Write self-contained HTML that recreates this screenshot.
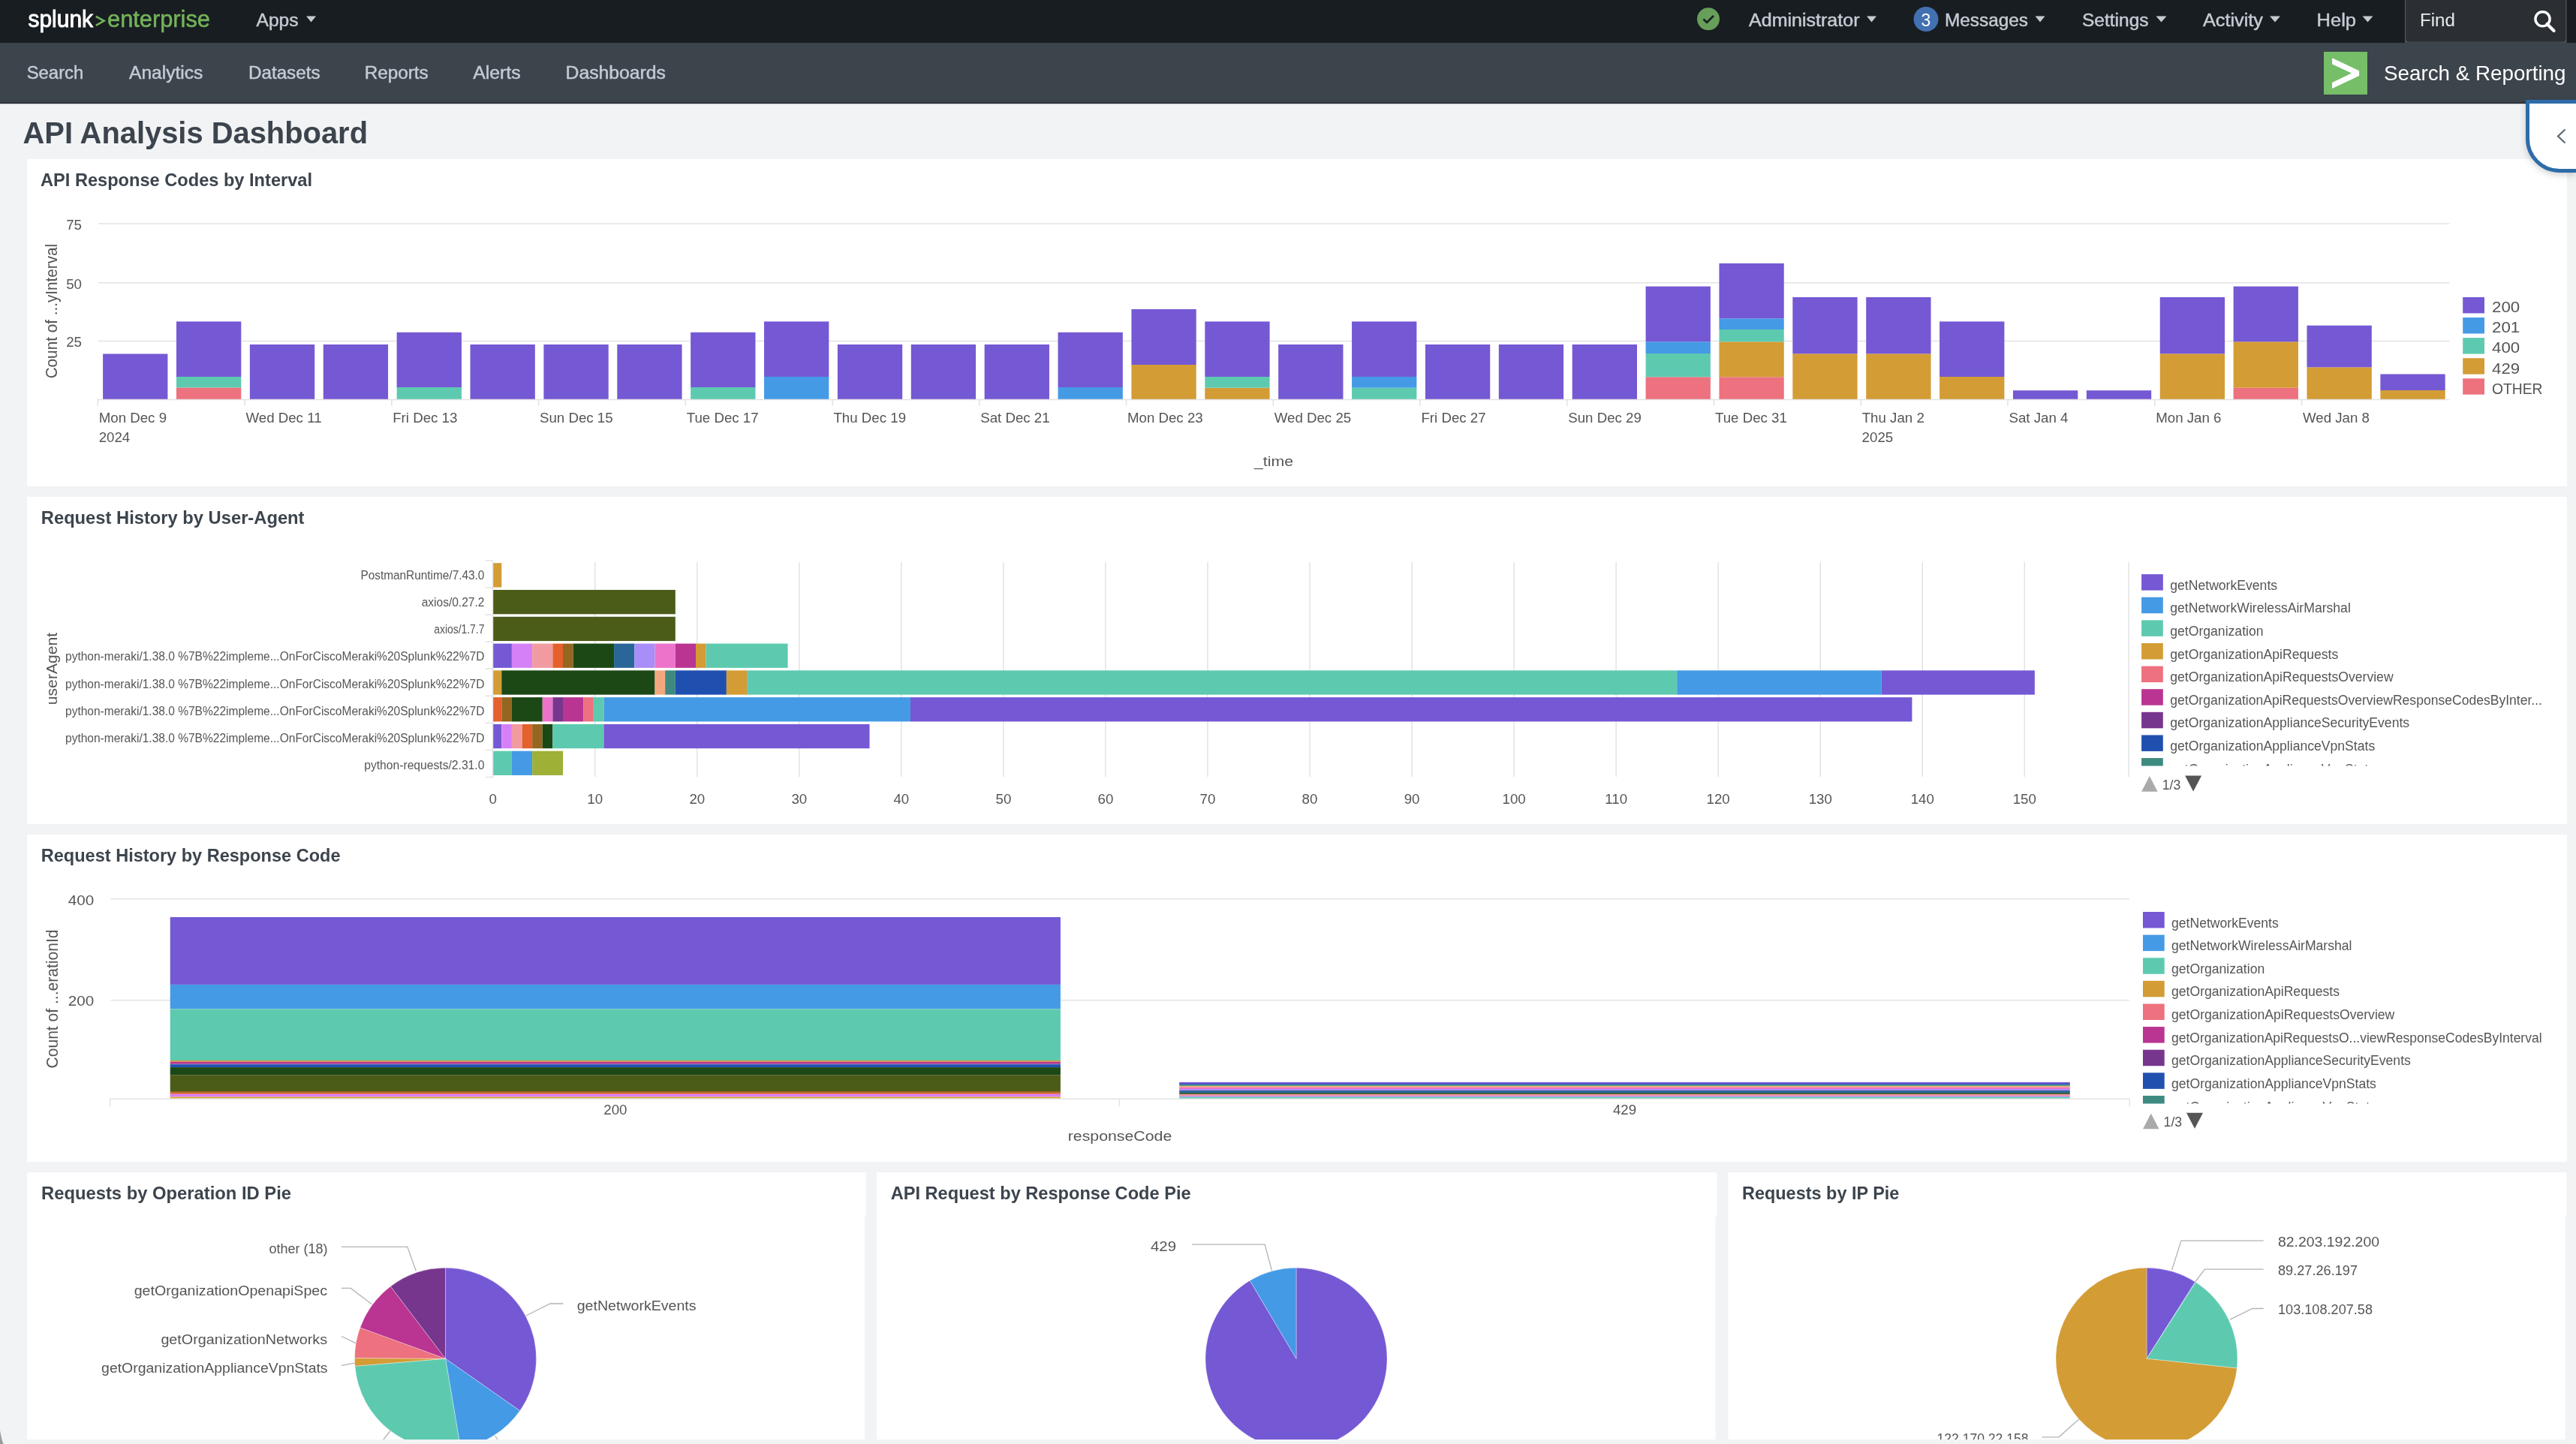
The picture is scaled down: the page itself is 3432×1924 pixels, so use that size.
<!DOCTYPE html>
<html><head><meta charset="utf-8"><title>API Analysis Dashboard</title>
<style>
html,body{margin:0;padding:0;background:#f2f3f5;}
body{width:3432px;height:1924px;overflow:hidden;font-family:"Liberation Sans", sans-serif;}
</style></head><body>
<svg width="3432" height="1924" viewBox="0 0 3432 1924" style="display:block;will-change:transform;font-family:'Liberation Sans', sans-serif"><defs><filter id="sh" x="-50%" y="-50%" width="200%" height="200%"><feDropShadow dx="0" dy="3" stdDeviation="4" flood-color="#000" flood-opacity="0.18"/></filter></defs><rect x="0" y="0" width="3432" height="1924" fill="#f2f3f5"/>
<rect x="0" y="0" width="3432" height="57" fill="#181d21"/>
<text x="37.5" y="36" font-size="31.5" fill="#ffffff" textLength="86.5" lengthAdjust="spacingAndGlyphs" stroke="#ffffff" stroke-width="0.9">splunk</text>
<polyline points="127.8,21.8 138.6,27.8 127.8,33.9" fill="none" stroke="#74b35a" stroke-width="2.6" stroke-linejoin="miter"/>
<text x="143" y="36" font-size="31" fill="#74b35a" textLength="137" lengthAdjust="spacingAndGlyphs" stroke="#74b35a" stroke-width="0.5">enterprise</text>
<text x="341.5" y="35" font-size="23" fill="#c4cbd3" textLength="56" lengthAdjust="spacingAndGlyphs" stroke="#c4cbd3" stroke-width="0.45">Apps</text>
<polygon points="408,21.5 421,21.5 414.5,29.5" fill="#c4cbd3"/>
<circle cx="2276" cy="25.3" r="15" fill="#669e5a"/>
<polyline points="2269.5,25.5 2274,30 2283,21" fill="none" stroke="#181d21" stroke-width="2.6"/>
<text x="2330" y="35" font-size="23" fill="#c4cbd3" textLength="147.5" lengthAdjust="spacingAndGlyphs" stroke="#c4cbd3" stroke-width="0.45">Administrator</text>
<polygon points="2487,21.5 2500,21.5 2493.5,29.5" fill="#c4cbd3"/>
<circle cx="2566" cy="25.5" r="16.5" fill="#4271b2"/>
<text x="2566" y="35" font-size="23" fill="#ffffff" text-anchor="middle">3</text>
<text x="2591" y="35" font-size="23" fill="#c4cbd3" textLength="111" lengthAdjust="spacingAndGlyphs" stroke="#c4cbd3" stroke-width="0.45">Messages</text>
<polygon points="2711.5,21.5 2724.5,21.5 2718,29.5" fill="#c4cbd3"/>
<text x="2774" y="35" font-size="23" fill="#c4cbd3" textLength="88.5" lengthAdjust="spacingAndGlyphs" stroke="#c4cbd3" stroke-width="0.45">Settings</text>
<polygon points="2872.5,21.5 2886.5,21.5 2879.5,29.5" fill="#c4cbd3"/>
<text x="2935" y="35" font-size="23" fill="#c4cbd3" textLength="80" lengthAdjust="spacingAndGlyphs" stroke="#c4cbd3" stroke-width="0.45">Activity</text>
<polygon points="3024,21.5 3038,21.5 3031,29.5" fill="#c4cbd3"/>
<text x="3086.5" y="35" font-size="23" fill="#c4cbd3" textLength="52.5" lengthAdjust="spacingAndGlyphs" stroke="#c4cbd3" stroke-width="0.45">Help</text>
<polygon points="3147.5,21.5 3161.5,21.5 3154.5,29.5" fill="#c4cbd3"/>
<rect x="3204" y="-2" width="215.5" height="58.8" fill="#50585f"/>
<rect x="3205.2" y="-6" width="213.1" height="61.8" rx="4" fill="#2b2f33"/>
<text x="3224" y="35.2" font-size="23" fill="#e8ebee" textLength="47" lengthAdjust="spacingAndGlyphs">Find</text>
<circle cx="3387.5" cy="25.3" r="9.6" fill="none" stroke="#ffffff" stroke-width="3.4"/>
<line x1="3393.5" y1="32" x2="3402.5" y2="41" stroke="#ffffff" stroke-width="4.2" stroke-linecap="round"/>
<rect x="0" y="57" width="3432" height="80" fill="#3c444c"/>
<rect x="0" y="136.8" width="3432" height="1.4" fill="#23282d"/>
<text x="35.7" y="105" font-size="23" fill="#c4cbd3" textLength="75.6" lengthAdjust="spacingAndGlyphs" stroke="#c4cbd3" stroke-width="0.45">Search</text>
<text x="172" y="105" font-size="23" fill="#c4cbd3" textLength="98.3" lengthAdjust="spacingAndGlyphs" stroke="#c4cbd3" stroke-width="0.45">Analytics</text>
<text x="331" y="105" font-size="23" fill="#c4cbd3" textLength="95.5" lengthAdjust="spacingAndGlyphs" stroke="#c4cbd3" stroke-width="0.45">Datasets</text>
<text x="485.8" y="105" font-size="23" fill="#c4cbd3" textLength="84.8" lengthAdjust="spacingAndGlyphs" stroke="#c4cbd3" stroke-width="0.45">Reports</text>
<text x="630.2" y="105" font-size="23" fill="#c4cbd3" textLength="63.4" lengthAdjust="spacingAndGlyphs" stroke="#c4cbd3" stroke-width="0.45">Alerts</text>
<text x="753.6" y="105" font-size="23" fill="#c4cbd3" textLength="133.3" lengthAdjust="spacingAndGlyphs" stroke="#c4cbd3" stroke-width="0.45">Dashboards</text>
<rect x="3096" y="69" width="58" height="57" fill="#76be68"/>
<polygon points="3107.1,77.2 3143.1,94.3 3143.1,101 3107.1,118 3107.1,109.9 3133,97.6 3107.1,85.4" fill="#ffffff"/>
<text x="3176" y="107" font-size="28.5" fill="#ffffff" textLength="242.5" lengthAdjust="spacingAndGlyphs">Search &amp; Reporting</text>
<text x="30.5" y="191.3" font-size="41.5" fill="#3c444d" font-weight="bold" textLength="459.5" lengthAdjust="spacingAndGlyphs">API Analysis Dashboard</text>
<rect x="36" y="212" width="3384" height="436" fill="#ffffff"/>
<rect x="36" y="662" width="3384" height="436" fill="#ffffff"/>
<rect x="36" y="1112" width="3384" height="436" fill="#ffffff"/>
<rect x="36" y="1562" width="1118" height="59" fill="#ffffff"/>
<rect x="36" y="1621" width="1116.2" height="297" fill="#ffffff"/>
<rect x="1168" y="1562" width="1119.5" height="59" fill="#ffffff"/>
<rect x="1168" y="1621" width="1117.5" height="297" fill="#ffffff"/>
<rect x="2302.5" y="1562" width="1117" height="59" fill="#ffffff"/>
<rect x="2302.5" y="1621" width="1115" height="297" fill="#ffffff"/>
<text x="54" y="247.8" font-size="24" fill="#3c444d" font-weight="bold" textLength="362" lengthAdjust="spacingAndGlyphs">API Response Codes by Interval</text>
<text x="54.8" y="698.3" font-size="24" fill="#3c444d" font-weight="bold" textLength="350.7" lengthAdjust="spacingAndGlyphs">Request History by User-Agent</text>
<text x="54.8" y="1148.1" font-size="24" fill="#3c444d" font-weight="bold" textLength="398.7" lengthAdjust="spacingAndGlyphs">Request History by Response Code</text>
<text x="55" y="1597.9" font-size="24" fill="#3c444d" font-weight="bold" textLength="333" lengthAdjust="spacingAndGlyphs">Requests by Operation ID Pie</text>
<text x="1186.7" y="1597.9" font-size="24" fill="#3c444d" font-weight="bold" textLength="399.9" lengthAdjust="spacingAndGlyphs">API Request by Response Code Pie</text>
<text x="2321" y="1597.6" font-size="24" fill="#3c444d" font-weight="bold" textLength="209.4" lengthAdjust="spacingAndGlyphs">Requests by IP Pie</text>
<line x1="131" y1="298" x2="3263.5" y2="298" stroke="#e3e3e3" stroke-width="1.5"/>
<line x1="131" y1="376.8" x2="3263.5" y2="376.8" stroke="#e3e3e3" stroke-width="1.5"/>
<line x1="131" y1="454.5" x2="3263.5" y2="454.5" stroke="#e3e3e3" stroke-width="1.5"/>
<text x="109" y="305.8" font-size="18.7" fill="#555555" text-anchor="end">75</text>
<text x="109" y="384.6" font-size="18.7" fill="#555555" text-anchor="end">50</text>
<text x="109" y="462.3" font-size="18.7" fill="#555555" text-anchor="end">25</text>
<text x="76.3" y="414.6" font-size="21.2" fill="#555555" text-anchor="middle" textLength="179.5" lengthAdjust="spacingAndGlyphs" transform="rotate(-90 76.3 414.6)">Count of ...yInterval</text>
<rect x="137.1" y="471.5" width="86.3" height="60.5" fill="#7558d4"/>
<rect x="234.98" y="516.4" width="86.3" height="15.6" fill="#ed717e"/>
<rect x="234.98" y="502" width="86.3" height="14.4" fill="#5dcab0"/>
<rect x="234.98" y="428.4" width="86.3" height="73.6" fill="#7558d4"/>
<rect x="332.86" y="459" width="86.3" height="73" fill="#7558d4"/>
<rect x="430.74" y="459" width="86.3" height="73" fill="#7558d4"/>
<rect x="528.62" y="516" width="86.3" height="16" fill="#5dcab0"/>
<rect x="528.62" y="442.8" width="86.3" height="73.2" fill="#7558d4"/>
<rect x="626.5" y="459" width="86.3" height="73" fill="#7558d4"/>
<rect x="724.38" y="459" width="86.3" height="73" fill="#7558d4"/>
<rect x="822.26" y="459" width="86.3" height="73" fill="#7558d4"/>
<rect x="920.14" y="516" width="86.3" height="16" fill="#5dcab0"/>
<rect x="920.14" y="442.8" width="86.3" height="73.2" fill="#7558d4"/>
<rect x="1018.02" y="502" width="86.3" height="30" fill="#459ae5"/>
<rect x="1018.02" y="428.4" width="86.3" height="73.6" fill="#7558d4"/>
<rect x="1115.9" y="459" width="86.3" height="73" fill="#7558d4"/>
<rect x="1213.78" y="459" width="86.3" height="73" fill="#7558d4"/>
<rect x="1311.66" y="459" width="86.3" height="73" fill="#7558d4"/>
<rect x="1409.54" y="516" width="86.3" height="16" fill="#459ae5"/>
<rect x="1409.54" y="442.8" width="86.3" height="73.2" fill="#7558d4"/>
<rect x="1507.42" y="486" width="86.3" height="46" fill="#d39c35"/>
<rect x="1507.42" y="412" width="86.3" height="74" fill="#7558d4"/>
<rect x="1605.3" y="516.7" width="86.3" height="15.3" fill="#d39c35"/>
<rect x="1605.3" y="502" width="86.3" height="14.7" fill="#5dcab0"/>
<rect x="1605.3" y="428.4" width="86.3" height="73.6" fill="#7558d4"/>
<rect x="1703.18" y="459" width="86.3" height="73" fill="#7558d4"/>
<rect x="1801.06" y="516.7" width="86.3" height="15.3" fill="#5dcab0"/>
<rect x="1801.06" y="502" width="86.3" height="14.7" fill="#459ae5"/>
<rect x="1801.06" y="428.4" width="86.3" height="73.6" fill="#7558d4"/>
<rect x="1898.94" y="459" width="86.3" height="73" fill="#7558d4"/>
<rect x="1996.82" y="459" width="86.3" height="73" fill="#7558d4"/>
<rect x="2094.7" y="459" width="86.3" height="73" fill="#7558d4"/>
<rect x="2192.58" y="502.3" width="86.3" height="29.7" fill="#ed717e"/>
<rect x="2192.58" y="471" width="86.3" height="31.3" fill="#5dcab0"/>
<rect x="2192.58" y="455.3" width="86.3" height="15.7" fill="#459ae5"/>
<rect x="2192.58" y="381.6" width="86.3" height="73.7" fill="#7558d4"/>
<rect x="2290.46" y="502.3" width="86.3" height="29.7" fill="#ed717e"/>
<rect x="2290.46" y="455.3" width="86.3" height="47" fill="#d39c35"/>
<rect x="2290.46" y="439" width="86.3" height="16.3" fill="#5dcab0"/>
<rect x="2290.46" y="424.3" width="86.3" height="14.7" fill="#459ae5"/>
<rect x="2290.46" y="350.9" width="86.3" height="73.4" fill="#7558d4"/>
<rect x="2388.34" y="471.3" width="86.3" height="60.7" fill="#d39c35"/>
<rect x="2388.34" y="396" width="86.3" height="75.3" fill="#7558d4"/>
<rect x="2486.22" y="471.3" width="86.3" height="60.7" fill="#d39c35"/>
<rect x="2486.22" y="396" width="86.3" height="75.3" fill="#7558d4"/>
<rect x="2584.1" y="502" width="86.3" height="30" fill="#d39c35"/>
<rect x="2584.1" y="428.4" width="86.3" height="73.6" fill="#7558d4"/>
<rect x="2681.98" y="520.2" width="86.3" height="11.8" fill="#7558d4"/>
<rect x="2779.86" y="520.2" width="86.3" height="11.8" fill="#7558d4"/>
<rect x="2877.74" y="471.3" width="86.3" height="60.7" fill="#d39c35"/>
<rect x="2877.74" y="396" width="86.3" height="75.3" fill="#7558d4"/>
<rect x="2975.62" y="516.7" width="86.3" height="15.3" fill="#ed717e"/>
<rect x="2975.62" y="455.3" width="86.3" height="61.4" fill="#d39c35"/>
<rect x="2975.62" y="381.6" width="86.3" height="73.7" fill="#7558d4"/>
<rect x="3073.5" y="489.3" width="86.3" height="42.7" fill="#d39c35"/>
<rect x="3073.5" y="433.7" width="86.3" height="55.6" fill="#7558d4"/>
<rect x="3171.38" y="520" width="86.3" height="12" fill="#d39c35"/>
<rect x="3171.38" y="498.5" width="86.3" height="21.5" fill="#7558d4"/>
<line x1="130" y1="532.5" x2="3263.5" y2="532.5" stroke="#e3e3e3" stroke-width="1.5"/>
<line x1="130.3" y1="532" x2="130.3" y2="541" stroke="#e3e3e3" stroke-width="1.5"/>
<text x="131.7" y="563" font-size="18.7" fill="#555555">Mon Dec 9</text>
<line x1="326.05" y1="532" x2="326.05" y2="541" stroke="#e3e3e3" stroke-width="1.5"/>
<text x="327.45" y="563" font-size="18.7" fill="#555555">Wed Dec 11</text>
<line x1="521.8" y1="532" x2="521.8" y2="541" stroke="#e3e3e3" stroke-width="1.5"/>
<text x="523.2" y="563" font-size="18.7" fill="#555555">Fri Dec 13</text>
<line x1="717.55" y1="532" x2="717.55" y2="541" stroke="#e3e3e3" stroke-width="1.5"/>
<text x="718.95" y="563" font-size="18.7" fill="#555555">Sun Dec 15</text>
<line x1="913.3" y1="532" x2="913.3" y2="541" stroke="#e3e3e3" stroke-width="1.5"/>
<text x="914.7" y="563" font-size="18.7" fill="#555555">Tue Dec 17</text>
<line x1="1109.05" y1="532" x2="1109.05" y2="541" stroke="#e3e3e3" stroke-width="1.5"/>
<text x="1110.45" y="563" font-size="18.7" fill="#555555">Thu Dec 19</text>
<line x1="1304.8" y1="532" x2="1304.8" y2="541" stroke="#e3e3e3" stroke-width="1.5"/>
<text x="1306.2" y="563" font-size="18.7" fill="#555555">Sat Dec 21</text>
<line x1="1500.55" y1="532" x2="1500.55" y2="541" stroke="#e3e3e3" stroke-width="1.5"/>
<text x="1501.95" y="563" font-size="18.7" fill="#555555">Mon Dec 23</text>
<line x1="1696.3" y1="532" x2="1696.3" y2="541" stroke="#e3e3e3" stroke-width="1.5"/>
<text x="1697.7" y="563" font-size="18.7" fill="#555555">Wed Dec 25</text>
<line x1="1892.05" y1="532" x2="1892.05" y2="541" stroke="#e3e3e3" stroke-width="1.5"/>
<text x="1893.45" y="563" font-size="18.7" fill="#555555">Fri Dec 27</text>
<line x1="2087.8" y1="532" x2="2087.8" y2="541" stroke="#e3e3e3" stroke-width="1.5"/>
<text x="2089.2" y="563" font-size="18.7" fill="#555555">Sun Dec 29</text>
<line x1="2283.55" y1="532" x2="2283.55" y2="541" stroke="#e3e3e3" stroke-width="1.5"/>
<text x="2284.95" y="563" font-size="18.7" fill="#555555">Tue Dec 31</text>
<line x1="2479.3" y1="532" x2="2479.3" y2="541" stroke="#e3e3e3" stroke-width="1.5"/>
<text x="2480.7" y="563" font-size="18.7" fill="#555555">Thu Jan 2</text>
<line x1="2675.05" y1="532" x2="2675.05" y2="541" stroke="#e3e3e3" stroke-width="1.5"/>
<text x="2676.45" y="563" font-size="18.7" fill="#555555">Sat Jan 4</text>
<line x1="2870.8" y1="532" x2="2870.8" y2="541" stroke="#e3e3e3" stroke-width="1.5"/>
<text x="2872.2" y="563" font-size="18.7" fill="#555555">Mon Jan 6</text>
<line x1="3066.55" y1="532" x2="3066.55" y2="541" stroke="#e3e3e3" stroke-width="1.5"/>
<text x="3067.95" y="563" font-size="18.7" fill="#555555">Wed Jan 8</text>
<text x="131.7" y="588.7" font-size="18.7" fill="#555555">2024</text>
<text x="2480.6" y="588.7" font-size="18.7" fill="#555555">2025</text>
<text x="1697" y="620.8" font-size="18.7" fill="#555555" text-anchor="middle" textLength="52" lengthAdjust="spacingAndGlyphs">_time</text>
<rect x="3281.2" y="396" width="28.8" height="21.4" fill="#7558d4"/>
<text x="3320" y="416.3" font-size="20.3" fill="#555555" textLength="37.2" lengthAdjust="spacingAndGlyphs">200</text>
<rect x="3281.2" y="423.07" width="28.8" height="21.4" fill="#459ae5"/>
<text x="3320" y="443.37" font-size="20.3" fill="#555555" textLength="37.2" lengthAdjust="spacingAndGlyphs">201</text>
<rect x="3281.2" y="450.14" width="28.8" height="21.4" fill="#5dcab0"/>
<text x="3320" y="470.44" font-size="20.3" fill="#555555" textLength="37.2" lengthAdjust="spacingAndGlyphs">400</text>
<rect x="3281.2" y="477.21" width="28.8" height="21.4" fill="#d39c35"/>
<text x="3320" y="497.51" font-size="20.3" fill="#555555" textLength="37.2" lengthAdjust="spacingAndGlyphs">429</text>
<rect x="3281.2" y="504.28" width="28.8" height="21.4" fill="#ed717e"/>
<text x="3320" y="524.58" font-size="20.3" fill="#555555" textLength="67.5" lengthAdjust="spacingAndGlyphs">OTHER</text>
<line x1="792.74" y1="748.8" x2="792.74" y2="1035" stroke="#e3e3e3" stroke-width="1.5"/>
<line x1="928.78" y1="748.8" x2="928.78" y2="1035" stroke="#e3e3e3" stroke-width="1.5"/>
<line x1="1064.82" y1="748.8" x2="1064.82" y2="1035" stroke="#e3e3e3" stroke-width="1.5"/>
<line x1="1200.86" y1="748.8" x2="1200.86" y2="1035" stroke="#e3e3e3" stroke-width="1.5"/>
<line x1="1336.9" y1="748.8" x2="1336.9" y2="1035" stroke="#e3e3e3" stroke-width="1.5"/>
<line x1="1472.94" y1="748.8" x2="1472.94" y2="1035" stroke="#e3e3e3" stroke-width="1.5"/>
<line x1="1608.98" y1="748.8" x2="1608.98" y2="1035" stroke="#e3e3e3" stroke-width="1.5"/>
<line x1="1745.02" y1="748.8" x2="1745.02" y2="1035" stroke="#e3e3e3" stroke-width="1.5"/>
<line x1="1881.06" y1="748.8" x2="1881.06" y2="1035" stroke="#e3e3e3" stroke-width="1.5"/>
<line x1="2017.1" y1="748.8" x2="2017.1" y2="1035" stroke="#e3e3e3" stroke-width="1.5"/>
<line x1="2153.14" y1="748.8" x2="2153.14" y2="1035" stroke="#e3e3e3" stroke-width="1.5"/>
<line x1="2289.18" y1="748.8" x2="2289.18" y2="1035" stroke="#e3e3e3" stroke-width="1.5"/>
<line x1="2425.22" y1="748.8" x2="2425.22" y2="1035" stroke="#e3e3e3" stroke-width="1.5"/>
<line x1="2561.26" y1="748.8" x2="2561.26" y2="1035" stroke="#e3e3e3" stroke-width="1.5"/>
<line x1="2697.3" y1="748.8" x2="2697.3" y2="1035" stroke="#e3e3e3" stroke-width="1.5"/>
<line x1="2836" y1="748.8" x2="2836" y2="1035" stroke="#e3e3e3" stroke-width="1.5"/>
<line x1="656.5" y1="747" x2="656.5" y2="1036" stroke="#e3e3e3" stroke-width="1.5"/>
<line x1="646.4" y1="747" x2="656.5" y2="747" stroke="#e3e3e3" stroke-width="1.5"/>
<line x1="646.4" y1="783.06" x2="656.5" y2="783.06" stroke="#e3e3e3" stroke-width="1.5"/>
<line x1="646.4" y1="819.12" x2="656.5" y2="819.12" stroke="#e3e3e3" stroke-width="1.5"/>
<line x1="646.4" y1="855.18" x2="656.5" y2="855.18" stroke="#e3e3e3" stroke-width="1.5"/>
<line x1="646.4" y1="891.24" x2="656.5" y2="891.24" stroke="#e3e3e3" stroke-width="1.5"/>
<line x1="646.4" y1="927.3" x2="656.5" y2="927.3" stroke="#e3e3e3" stroke-width="1.5"/>
<line x1="646.4" y1="963.36" x2="656.5" y2="963.36" stroke="#e3e3e3" stroke-width="1.5"/>
<line x1="646.4" y1="999.42" x2="656.5" y2="999.42" stroke="#e3e3e3" stroke-width="1.5"/>
<line x1="646.4" y1="1035.48" x2="656.5" y2="1035.48" stroke="#e3e3e3" stroke-width="1.5"/>
<text x="656.7" y="1071.2" font-size="18.7" fill="#555555" text-anchor="middle">0</text>
<text x="792.74" y="1071.2" font-size="18.7" fill="#555555" text-anchor="middle">10</text>
<text x="928.78" y="1071.2" font-size="18.7" fill="#555555" text-anchor="middle">20</text>
<text x="1064.82" y="1071.2" font-size="18.7" fill="#555555" text-anchor="middle">30</text>
<text x="1200.86" y="1071.2" font-size="18.7" fill="#555555" text-anchor="middle">40</text>
<text x="1336.9" y="1071.2" font-size="18.7" fill="#555555" text-anchor="middle">50</text>
<text x="1472.94" y="1071.2" font-size="18.7" fill="#555555" text-anchor="middle">60</text>
<text x="1608.98" y="1071.2" font-size="18.7" fill="#555555" text-anchor="middle">70</text>
<text x="1745.02" y="1071.2" font-size="18.7" fill="#555555" text-anchor="middle">80</text>
<text x="1881.06" y="1071.2" font-size="18.7" fill="#555555" text-anchor="middle">90</text>
<text x="2017.1" y="1071.2" font-size="18.7" fill="#555555" text-anchor="middle">100</text>
<text x="2153.14" y="1071.2" font-size="18.7" fill="#555555" text-anchor="middle">110</text>
<text x="2289.18" y="1071.2" font-size="18.7" fill="#555555" text-anchor="middle">120</text>
<text x="2425.22" y="1071.2" font-size="18.7" fill="#555555" text-anchor="middle">130</text>
<text x="2561.26" y="1071.2" font-size="18.7" fill="#555555" text-anchor="middle">140</text>
<text x="2697.3" y="1071.2" font-size="18.7" fill="#555555" text-anchor="middle">150</text>
<rect x="657.2" y="750.2" width="11.09" height="32.3" fill="#d39c35"/>
<text x="645.4" y="772.3" font-size="16.8" fill="#555555" text-anchor="end" textLength="165" lengthAdjust="spacingAndGlyphs">PostmanRuntime/7.43.0</text>
<rect x="657.2" y="785.98" width="242.58" height="32.3" fill="#4b5c18"/>
<text x="645.4" y="808.36" font-size="16.8" fill="#555555" text-anchor="end" textLength="83.7" lengthAdjust="spacingAndGlyphs">axios/0.27.2</text>
<rect x="657.2" y="821.76" width="242.58" height="32.3" fill="#4b5c18"/>
<text x="645.4" y="844.42" font-size="16.8" fill="#555555" text-anchor="end" textLength="67.1" lengthAdjust="spacingAndGlyphs">axios/1.7.7</text>
<rect x="657.2" y="857.54" width="24.7" height="32.3" fill="#7558d4"/>
<rect x="681.9" y="857.54" width="27.23" height="32.3" fill="#d680f7"/>
<rect x="709.14" y="857.54" width="27.23" height="32.3" fill="#f19ba0"/>
<rect x="736.37" y="857.54" width="13.62" height="32.3" fill="#e4602c"/>
<rect x="749.99" y="857.54" width="13.62" height="32.3" fill="#956620"/>
<rect x="763.61" y="857.54" width="54.47" height="32.3" fill="#1c4815"/>
<rect x="818.07" y="857.54" width="27.23" height="32.3" fill="#2b6699"/>
<rect x="845.31" y="857.54" width="27.23" height="32.3" fill="#a98df8"/>
<rect x="872.54" y="857.54" width="27.23" height="32.3" fill="#ed73ca"/>
<rect x="899.78" y="857.54" width="27.23" height="32.3" fill="#ba3492"/>
<rect x="927.01" y="857.54" width="13.62" height="32.3" fill="#d39c35"/>
<rect x="940.63" y="857.54" width="108.94" height="32.3" fill="#5dcab0"/>
<text x="645.4" y="880.48" font-size="16.8" fill="#555555" text-anchor="end" textLength="558.4" lengthAdjust="spacingAndGlyphs">python-meraki/1.38.0 %7B%22impleme...OnForCiscoMeraki%20Splunk%22%7D</text>
<rect x="657.2" y="893.32" width="11.09" height="32.3" fill="#d39c35"/>
<rect x="668.29" y="893.32" width="204.25" height="32.3" fill="#1c4815"/>
<rect x="872.54" y="893.32" width="13.62" height="32.3" fill="#f2a87e"/>
<rect x="886.16" y="893.32" width="13.62" height="32.3" fill="#3d8a80"/>
<rect x="899.78" y="893.32" width="68.09" height="32.3" fill="#2050af"/>
<rect x="967.86" y="893.32" width="27.23" height="32.3" fill="#d39c35"/>
<rect x="995.1" y="893.32" width="1239.15" height="32.3" fill="#5dcab0"/>
<rect x="2234.24" y="893.32" width="272.34" height="32.3" fill="#459ae5"/>
<rect x="2506.58" y="893.32" width="204.26" height="32.3" fill="#7558d4"/>
<text x="645.4" y="916.54" font-size="16.8" fill="#555555" text-anchor="end" textLength="558.4" lengthAdjust="spacingAndGlyphs">python-meraki/1.38.0 %7B%22impleme...OnForCiscoMeraki%20Splunk%22%7D</text>
<rect x="657.2" y="929.1" width="11.09" height="32.3" fill="#e4602c"/>
<rect x="668.29" y="929.1" width="13.62" height="32.3" fill="#956620"/>
<rect x="681.9" y="929.1" width="40.85" height="32.3" fill="#1c4815"/>
<rect x="722.75" y="929.1" width="13.62" height="32.3" fill="#ed73ca"/>
<rect x="736.37" y="929.1" width="13.62" height="32.3" fill="#77368e"/>
<rect x="749.99" y="929.1" width="27.23" height="32.3" fill="#ba3492"/>
<rect x="777.22" y="929.1" width="13.62" height="32.3" fill="#ed717e"/>
<rect x="790.84" y="929.1" width="13.62" height="32.3" fill="#5dcab0"/>
<rect x="804.46" y="929.1" width="408.51" height="32.3" fill="#459ae5"/>
<rect x="1212.97" y="929.1" width="1334.47" height="32.3" fill="#7558d4"/>
<text x="645.4" y="952.6" font-size="16.8" fill="#555555" text-anchor="end" textLength="558.4" lengthAdjust="spacingAndGlyphs">python-meraki/1.38.0 %7B%22impleme...OnForCiscoMeraki%20Splunk%22%7D</text>
<rect x="657.2" y="964.88" width="11.09" height="32.3" fill="#7558d4"/>
<rect x="668.29" y="964.88" width="13.62" height="32.3" fill="#d680f7"/>
<rect x="681.9" y="964.88" width="13.62" height="32.3" fill="#f19ba0"/>
<rect x="695.52" y="964.88" width="13.62" height="32.3" fill="#e4602c"/>
<rect x="709.14" y="964.88" width="13.62" height="32.3" fill="#956620"/>
<rect x="722.75" y="964.88" width="13.62" height="32.3" fill="#1c4815"/>
<rect x="736.37" y="964.88" width="68.09" height="32.3" fill="#5dcab0"/>
<rect x="804.46" y="964.88" width="354.04" height="32.3" fill="#7558d4"/>
<text x="645.4" y="988.66" font-size="16.8" fill="#555555" text-anchor="end" textLength="558.4" lengthAdjust="spacingAndGlyphs">python-meraki/1.38.0 %7B%22impleme...OnForCiscoMeraki%20Splunk%22%7D</text>
<rect x="657.2" y="1000.66" width="24.7" height="32.3" fill="#5dcab0"/>
<rect x="681.9" y="1000.66" width="27.23" height="32.3" fill="#459ae5"/>
<rect x="709.14" y="1000.66" width="40.85" height="32.3" fill="#9eb036"/>
<text x="645.4" y="1024.72" font-size="16.8" fill="#555555" text-anchor="end" textLength="160.2" lengthAdjust="spacingAndGlyphs">python-requests/2.31.0</text>
<text x="76" y="891" font-size="20.2" fill="#555555" text-anchor="middle" textLength="96.5" lengthAdjust="spacingAndGlyphs" transform="rotate(-90 76 891)">userAgent</text>
<clipPath id="lca"><rect x="2851.1" y="755.1" width="600" height="265.3"/></clipPath>
<g clip-path="url(#lca)">
<rect x="2853.1" y="765.1" width="28.7" height="21.5" fill="#7558d4"/>
<text x="2891.3" y="785.7" font-size="17.6" fill="#555555">getNetworkEvents</text>
<rect x="2853.1" y="795.72" width="28.7" height="21.5" fill="#459ae5"/>
<text x="2891.3" y="816.32" font-size="17.6" fill="#555555">getNetworkWirelessAirMarshal</text>
<rect x="2853.1" y="826.34" width="28.7" height="21.5" fill="#5dcab0"/>
<text x="2891.3" y="846.94" font-size="17.6" fill="#555555">getOrganization</text>
<rect x="2853.1" y="856.96" width="28.7" height="21.5" fill="#d39c35"/>
<text x="2891.3" y="877.56" font-size="17.6" fill="#555555">getOrganizationApiRequests</text>
<rect x="2853.1" y="887.58" width="28.7" height="21.5" fill="#ed717e"/>
<text x="2891.3" y="908.18" font-size="17.6" fill="#555555">getOrganizationApiRequestsOverview</text>
<rect x="2853.1" y="918.2" width="28.7" height="21.5" fill="#ba3492"/>
<text x="2891.3" y="938.8" font-size="17.6" fill="#555555" textLength="495.7" lengthAdjust="spacingAndGlyphs">getOrganizationApiRequestsOverviewResponseCodesByInter...</text>
<rect x="2853.1" y="948.82" width="28.7" height="21.5" fill="#77368e"/>
<text x="2891.3" y="969.42" font-size="17.6" fill="#555555">getOrganizationApplianceSecurityEvents</text>
<rect x="2853.1" y="979.44" width="28.7" height="21.5" fill="#2050af"/>
<text x="2891.3" y="1000.04" font-size="17.6" fill="#555555">getOrganizationApplianceVpnStats</text>
<rect x="2853.1" y="1010.06" width="28.7" height="21.5" fill="#3d8a80"/>
<text x="2891.3" y="1030.66" font-size="17.6" fill="#555555">getOrganizationApplianceVpnStats</text>
</g>
<polygon points="2853.1,1054.8 2874.6,1054.8 2863.85,1034" fill="#aaaaaa"/>
<text x="2880.7" y="1051.5" font-size="18.7" fill="#555555" textLength="24.5" lengthAdjust="spacingAndGlyphs">1/3</text>
<polygon points="2911.1,1033.4 2933.1,1033.4 2922.1,1054.4" fill="#555555"/>
<line x1="147.5" y1="1197.8" x2="2836.6" y2="1197.8" stroke="#e3e3e3" stroke-width="1.5"/>
<line x1="147.5" y1="1332.7" x2="2836.6" y2="1332.7" stroke="#e3e3e3" stroke-width="1.5"/>
<text x="125.2" y="1206" font-size="18.7" fill="#555555" text-anchor="end" textLength="34.4" lengthAdjust="spacingAndGlyphs">400</text>
<text x="125.2" y="1339.8" font-size="18.7" fill="#555555" text-anchor="end" textLength="34.4" lengthAdjust="spacingAndGlyphs">200</text>
<text x="77" y="1331" font-size="21.2" fill="#555555" text-anchor="middle" textLength="185" lengthAdjust="spacingAndGlyphs" transform="rotate(-90 77 1331)">Count of ...erationId</text>
<rect x="226.7" y="1222" width="1186.2" height="89.9" fill="#7558d4"/>
<rect x="226.7" y="1311.9" width="1186.2" height="32.5" fill="#459ae5"/>
<rect x="226.7" y="1344.4" width="1186.2" height="68.6" fill="#5dcab0"/>
<rect x="226.7" y="1413" width="1186.2" height="1.75" fill="#d39c35"/>
<rect x="226.7" y="1414.75" width="1186.2" height="2.75" fill="#ba3492"/>
<rect x="226.7" y="1417.5" width="1186.2" height="0.7" fill="#77368e"/>
<rect x="226.7" y="1418.2" width="1186.2" height="3.9" fill="#2050af"/>
<rect x="226.7" y="1422.1" width="1186.2" height="10.1" fill="#1c4815"/>
<rect x="226.7" y="1432.2" width="1186.2" height="21.8" fill="#4b5c18"/>
<rect x="226.7" y="1454" width="1186.2" height="1.9" fill="#956620"/>
<rect x="226.7" y="1455.9" width="1186.2" height="1.9" fill="#e4602c"/>
<rect x="226.7" y="1457.8" width="1186.2" height="3.2" fill="#d680f7"/>
<rect x="226.7" y="1461" width="1186.2" height="0.7" fill="#f19ba0"/>
<rect x="226.7" y="1461.7" width="1186.2" height="1.9" fill="#d39c35"/>
<rect x="1571.2" y="1441.9" width="1186.6" height="2.1" fill="#7558d4"/>
<rect x="1571.2" y="1444" width="1186.6" height="1.2" fill="#2050af"/>
<rect x="1571.2" y="1445.2" width="1186.6" height="1.7" fill="#3d8a80"/>
<rect x="1571.2" y="1446.9" width="1186.6" height="2" fill="#f2a87e"/>
<rect x="1571.2" y="1448.9" width="1186.6" height="2.1" fill="#ed73ca"/>
<rect x="1571.2" y="1451" width="1186.6" height="2" fill="#a98df8"/>
<rect x="1571.2" y="1453" width="1186.6" height="3.2" fill="#2b6699"/>
<rect x="1571.2" y="1456.2" width="1186.6" height="1.7" fill="#1c4815"/>
<rect x="1571.2" y="1457.9" width="1186.6" height="2.1" fill="#f19ba0"/>
<rect x="1571.2" y="1460" width="1186.6" height="1.5" fill="#d680f7"/>
<rect x="1571.2" y="1461.5" width="1186.6" height="2.3" fill="#5dcab0"/>
<line x1="146.5" y1="1464.3" x2="2837.6" y2="1464.3" stroke="#e3e3e3" stroke-width="1.5"/>
<line x1="146.6" y1="1464" x2="146.6" y2="1474" stroke="#e3e3e3" stroke-width="1.5"/>
<line x1="1491.4" y1="1464" x2="1491.4" y2="1474" stroke="#e3e3e3" stroke-width="1.5"/>
<line x1="2837.2" y1="1464" x2="2837.2" y2="1474" stroke="#e3e3e3" stroke-width="1.5"/>
<text x="819.9" y="1484.7" font-size="18.7" fill="#555555" text-anchor="middle">200</text>
<text x="2164.5" y="1484.7" font-size="18.7" fill="#555555" text-anchor="middle">429</text>
<text x="1492" y="1520.3" font-size="18.7" fill="#555555" text-anchor="middle" textLength="138.6" lengthAdjust="spacingAndGlyphs">responseCode</text>
<clipPath id="lcb"><rect x="2853" y="1205" width="600" height="265.4"/></clipPath>
<g clip-path="url(#lcb)">
<rect x="2855" y="1215" width="28.7" height="21.5" fill="#7558d4"/>
<text x="2893" y="1235.6" font-size="17.6" fill="#555555">getNetworkEvents</text>
<rect x="2855" y="1245.62" width="28.7" height="21.5" fill="#459ae5"/>
<text x="2893" y="1266.22" font-size="17.6" fill="#555555">getNetworkWirelessAirMarshal</text>
<rect x="2855" y="1276.24" width="28.7" height="21.5" fill="#5dcab0"/>
<text x="2893" y="1296.84" font-size="17.6" fill="#555555">getOrganization</text>
<rect x="2855" y="1306.86" width="28.7" height="21.5" fill="#d39c35"/>
<text x="2893" y="1327.46" font-size="17.6" fill="#555555">getOrganizationApiRequests</text>
<rect x="2855" y="1337.48" width="28.7" height="21.5" fill="#ed717e"/>
<text x="2893" y="1358.08" font-size="17.6" fill="#555555">getOrganizationApiRequestsOverview</text>
<rect x="2855" y="1368.1" width="28.7" height="21.5" fill="#ba3492"/>
<text x="2893" y="1388.7" font-size="17.6" fill="#555555" textLength="493.6" lengthAdjust="spacingAndGlyphs">getOrganizationApiRequestsO...viewResponseCodesByInterval</text>
<rect x="2855" y="1398.72" width="28.7" height="21.5" fill="#77368e"/>
<text x="2893" y="1419.32" font-size="17.6" fill="#555555">getOrganizationApplianceSecurityEvents</text>
<rect x="2855" y="1429.34" width="28.7" height="21.5" fill="#2050af"/>
<text x="2893" y="1449.94" font-size="17.6" fill="#555555">getOrganizationApplianceVpnStats</text>
<rect x="2855" y="1459.96" width="28.7" height="21.5" fill="#3d8a80"/>
<text x="2893" y="1480.56" font-size="17.6" fill="#555555">getOrganizationApplianceVpnStats</text>
</g>
<polygon points="2855,1504.2 2876.5,1504.2 2865.75,1483.4" fill="#aaaaaa"/>
<text x="2882.6" y="1500.9" font-size="18.7" fill="#555555" textLength="24.5" lengthAdjust="spacingAndGlyphs">1/3</text>
<polygon points="2913,1482.8 2935,1482.8 2924,1503.8" fill="#555555"/>
<clipPath id="pc1"><rect x="72.5" y="1489.3" width="1042" height="428.7"/></clipPath>
<g clip-path="url(#pc1)">
<path d="M593.5,1810.3 L593.5,1689.3 A121,121 0 0 1 692.62,1879.7 Z" fill="#7558d4" stroke="#ffffff" stroke-width="0.35"/>
<path d="M593.5,1810.3 L692.62,1879.7 A121,121 0 0 1 613.68,1929.61 Z" fill="#459ae5" stroke="#ffffff" stroke-width="0.35"/>
<path d="M593.5,1810.3 L613.68,1929.61 A121,121 0 0 1 472.91,1820.21 Z" fill="#5dcab0" stroke="#ffffff" stroke-width="0.35"/>
<path d="M593.5,1810.3 L472.91,1820.21 A121,121 0 0 1 472.5,1809.46 Z" fill="#d39c35" stroke="#ffffff" stroke-width="0.35"/>
<path d="M593.5,1810.3 L472.5,1809.46 A121,121 0 0 1 479.8,1768.92 Z" fill="#ed717e" stroke="#ffffff" stroke-width="0.35"/>
<path d="M593.5,1810.3 L479.8,1768.92 A121,121 0 0 1 520.34,1713.92 Z" fill="#ba3492" stroke="#ffffff" stroke-width="0.35"/>
<path d="M593.5,1810.3 L520.34,1713.92 A121,121 0 0 1 593.5,1689.3 Z" fill="#77368e" stroke="#ffffff" stroke-width="0.35"/>
</g>
<polyline points="454.9,1661.4 542.8,1661.4 554.3,1693.5" fill="none" stroke="#b3b3b3" stroke-width="1.3"/>
<polyline points="454.9,1716.4 467.2,1716.4 495.7,1737.9" fill="none" stroke="#b3b3b3" stroke-width="1.3"/>
<polyline points="454.9,1780.5 474.1,1789.7" fill="none" stroke="#b3b3b3" stroke-width="1.3"/>
<polyline points="454.9,1819.4 472.7,1816.2" fill="none" stroke="#b3b3b3" stroke-width="1.3"/>
<polyline points="750.3,1737 733,1737 700.9,1753" fill="none" stroke="#b3b3b3" stroke-width="1.3"/>
<polyline points="520,1906.5 510.8,1918" fill="none" stroke="#b3b3b3" stroke-width="1.3"/>
<polyline points="659.5,1913 663,1918" fill="none" stroke="#b3b3b3" stroke-width="1.3"/>
<text x="436.6" y="1670" font-size="18.7" fill="#555555" text-anchor="end" textLength="78" lengthAdjust="spacingAndGlyphs">other (18)</text>
<text x="436.1" y="1726" font-size="18.7" fill="#555555" text-anchor="end" textLength="257.4" lengthAdjust="spacingAndGlyphs">getOrganizationOpenapiSpec</text>
<text x="436.1" y="1790.6" font-size="18.7" fill="#555555" text-anchor="end" textLength="221.7" lengthAdjust="spacingAndGlyphs">getOrganizationNetworks</text>
<text x="436.6" y="1829" font-size="18.7" fill="#555555" text-anchor="end" textLength="301.5" lengthAdjust="spacingAndGlyphs">getOrganizationApplianceVpnStats</text>
<text x="768.7" y="1745.7" font-size="18.7" fill="#555555" textLength="158.9" lengthAdjust="spacingAndGlyphs">getNetworkEvents</text>
<clipPath id="pc2"><rect x="1206" y="1489.3" width="1042" height="428.7"/></clipPath>
<g clip-path="url(#pc2)">
<path d="M1727,1810.3 L1727,1689.3 A121,121 0 1 1 1665.22,1706.26 Z" fill="#7558d4" stroke="#ffffff" stroke-width="0.35"/>
<path d="M1727,1810.3 L1665.22,1706.26 A121,121 0 0 1 1727,1689.3 Z" fill="#459ae5" stroke="#ffffff" stroke-width="0.35"/>
</g>
<polyline points="1588,1658.2 1685.1,1658.2 1694.3,1692.5" fill="none" stroke="#b3b3b3" stroke-width="1.3"/>
<text x="1567" y="1666.5" font-size="18.7" fill="#555555" text-anchor="end" textLength="34" lengthAdjust="spacingAndGlyphs">429</text>
<clipPath id="pc3"><rect x="2339" y="1489.3" width="1042" height="428.7"/></clipPath>
<g clip-path="url(#pc3)">
<path d="M2860,1810.3 L2860,1689.3 A121,121 0 0 1 2924.66,1708.02 Z" fill="#7558d4" stroke="#ffffff" stroke-width="0.35"/>
<path d="M2860,1810.3 L2924.66,1708.02 A121,121 0 0 1 2925.55,1708.59 Z" fill="#459ae5" stroke="#ffffff" stroke-width="0.35"/>
<path d="M2860,1810.3 L2925.55,1708.59 A121,121 0 0 1 2980.34,1822.95 Z" fill="#5dcab0" stroke="#ffffff" stroke-width="0.35"/>
<path d="M2860,1810.3 L2980.34,1822.95 A121,121 0 1 1 2860,1689.3 Z" fill="#d39c35" stroke="#ffffff" stroke-width="0.35"/>
</g>
<polyline points="3015.7,1653.1 2906,1653.1 2893.6,1692" fill="none" stroke="#b3b3b3" stroke-width="1.3"/>
<polyline points="3015.7,1691.2 2937.4,1691.2 2924,1709" fill="none" stroke="#b3b3b3" stroke-width="1.3"/>
<polyline points="3015.7,1743.5 3001,1743.5 2971,1758.2" fill="none" stroke="#b3b3b3" stroke-width="1.3"/>
<polyline points="2720.5,1914.8 2742.9,1914.8 2769.7,1891" fill="none" stroke="#b3b3b3" stroke-width="1.3"/>
<text x="3035" y="1661" font-size="18.7" fill="#555555" textLength="135" lengthAdjust="spacingAndGlyphs">82.203.192.200</text>
<text x="3035" y="1699" font-size="18.7" fill="#555555" textLength="106" lengthAdjust="spacingAndGlyphs">89.27.26.197</text>
<text x="3035" y="1751" font-size="18.7" fill="#555555" textLength="126" lengthAdjust="spacingAndGlyphs">103.108.207.58</text>
<clipPath id="pc4"><rect x="2302" y="1562" width="1117" height="356"/></clipPath>
<g clip-path="url(#pc4)">
<text x="2580.5" y="1922.5" font-size="18.7" fill="#555555" textLength="122" lengthAdjust="spacingAndGlyphs">122.170.22.158</text>
</g>
<path d="M0,1906 Q2,1918 4.5,1924 L0,1924 Z" fill="#9a9a9a"/>
<path d="M3432,135.5 L3367.5,135.5 L3367.5,185 A42.5,42.5 0 0 0 3410,227.5 L3432,227.5" fill="#ffffff" stroke="#2e6ca9" stroke-width="5" filter="url(#sh)"/>
<polyline points="3417.5,172.5 3408,181.5 3417.5,190.5" fill="none" stroke="#5c6773" stroke-width="2.2"/></svg>
</body></html>
